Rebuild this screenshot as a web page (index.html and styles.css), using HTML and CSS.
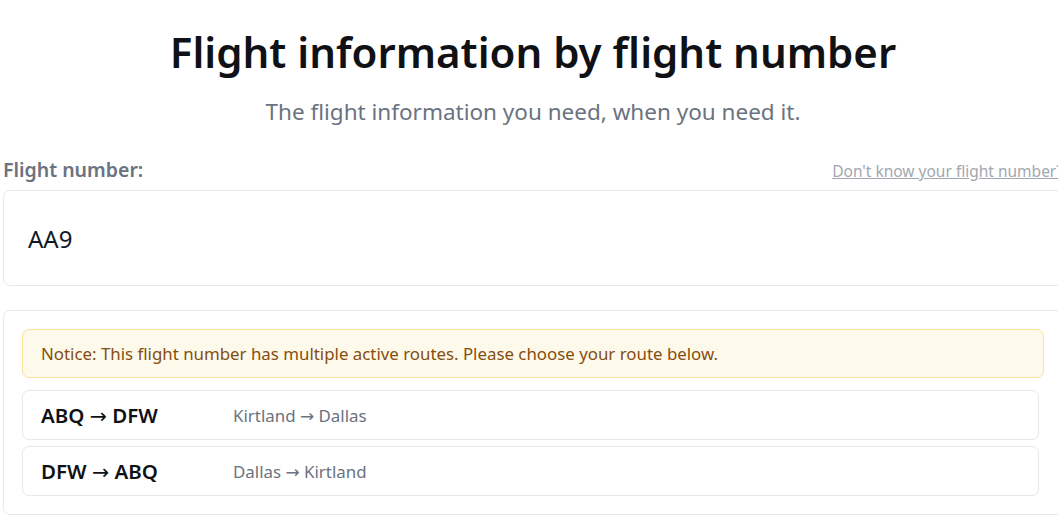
FILE: index.html
```html
<!DOCTYPE html>
<html lang="en">
<head>
    <meta charset="UTF-8">
    <meta name="viewport" content="width=device-width, initial-scale=1.0">
    <title>Flight information by flight number</title>
    <link rel="stylesheet" href="styles.css">
</head>
<body>
    <div class="container">
        <h1 class="title">Flight information by flight number</h1>
        <p class="subtitle">The flight information you need, when you need it.</p>

        <div class="field-head">
            <label class="field-label" for="flight-input">Flight number:</label>
            <a class="help-link" href="#">Don't know your flight number?</a>
        </div>
        <div class="input-card">
            <input class="flight-input" id="flight-input" type="text" value="AA9">
        </div>

        <div class="results">
            <div class="notice">Notice: This flight number has multiple active routes. Please choose your route below.</div>
            <div class="routes">
                <div class="route">
                    <span class="route-codes">ABQ <span class="arrow">&rarr;</span> DFW</span>
                    <span class="route-cities">Kirtland <span class="arrow">&rarr;</span> Dallas</span>
                </div>
                <div class="route">
                    <span class="route-codes">DFW <span class="arrow">&rarr;</span> ABQ</span>
                    <span class="route-cities">Dallas <span class="arrow">&rarr;</span> Kirtland</span>
                </div>
            </div>
        </div>
    </div>
</body>
</html>
```
FILE: styles.css
```css
body {
    font-family: "Noto Sans", "Open Sans", sans-serif;
    background-color: #ffffff;
    color: #111827;
    margin: 0;
    padding: 0;
    overflow: hidden;
}
.container {
    width: 1060px;
    margin-left: 3px;
}
.title {
    font-size: 42px;
    font-weight: 600;
    text-align: center;
    margin: 22px 0 0;
    line-height: 60px;
    color: #0f1115;
}
.subtitle {
    font-size: 22.5px;
    text-align: center;
    color: #6b7280;
    margin: 15px 0 0;
    line-height: 30px;
}
.field-head {
    display: flex;
    justify-content: space-between;
    align-items: baseline;
    margin-top: 29px;
}
.field-label {
    font-size: 19.5px;
    font-weight: 600;
    color: #6b7280;
}
.help-link {
    font-size: 15.5px;
    color: #a3a7b0;
    text-decoration: underline;
    white-space: nowrap;
}
.input-card {
    margin-top: 7px;
    border: 1px solid #e5e7eb;
    border-radius: 7px;
    height: 94px;
    display: flex;
    align-items: center;
}
.flight-input {
    border: none;
    outline: none;
    font-family: inherit;
    font-size: 24px;
    color: #111827;
    padding: 0 0 0 24px;
    width: 100%;
    background: transparent;
}
.results {
    margin-top: 24px;
    border: 1px solid #e5e7eb;
    border-radius: 7px;
    padding: 18px;
}
.notice {
    background: #fefaeb;
    border: 1px solid #fbe29a;
    border-radius: 7px;
    color: #854d0e;
    font-size: 16.85px;
    padding: 0 18px;
    height: 47px;
    display: flex;
    align-items: center;
}
.routes {
    margin-top: 12px;
    margin-right: 5px;
    display: flex;
    flex-direction: column;
    gap: 6px;
}
.route {
    border: 1px solid #e5e7eb;
    border-radius: 7px;
    height: 48px;
    display: flex;
    align-items: center;
    padding: 0 18px;
}
.route-codes {
    width: 192px;
    font-size: 20.5px;
    font-weight: 600;
    color: #0f1115;
}
.route-cities {
    font-size: 16.9px;
    color: #6b7280;
}
.arrow {
    font-family: "DejaVu Sans", sans-serif;
    font-weight: normal;
    font-size: 1em;
}
```
